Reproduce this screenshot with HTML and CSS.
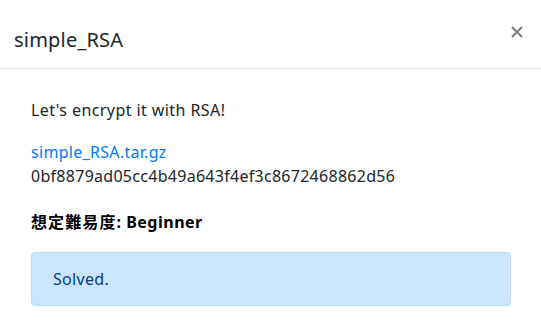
FILE: index.html
```html
<!DOCTYPE html>
<html lang="ja">
<head>
<meta charset="utf-8">
<title>simple_RSA</title>
<link rel="stylesheet" href="styles.css">
</head>
<body>
<div class="modal">
  <div class="modal-header">
    <h5 class="modal-title">simple_RSA</h5>
    <button class="close" type="button" aria-label="Close">
      <svg width="12" height="12" viewBox="0 0 12 12"><path d="M1 1L11 11M11 1L1 11" stroke="#808080" stroke-width="2.2" stroke-linecap="butt"/></svg>
    </button>
  </div>
  <div class="modal-body">
    <p class="desc">Let's encrypt it with RSA!</p>
    <p class="files"><a href="#">simple_RSA.tar.gz</a><br><span class="hash">0bf8879ad05cc4b49a643f4ef3c8672468862d56</span></p>
    <p class="level"><strong><span class="cjk">想定難易度</span>: Beginner</strong></p>
    <div class="alert">Solved.</div>
  </div>
</div>
</body>
</html>
```
FILE: styles.css
```css
html, body {
  margin: 0;
  padding: 0;
  background: #fff;
}
body {
  font-family: "Noto Sans", "Noto Sans CJK JP", sans-serif;
  font-size: 16px;
  line-height: 24px;
  color: #212529;
}
.modal {
  width: 541px;
  height: 336px;
  overflow: hidden;
}
.modal-header {
  display: flex;
  align-items: flex-start;
  padding: 25px 18px 13px 14px;
  border-bottom: 1px solid #dee2e6;
}
.modal-title {
  margin: 0;
  font-size: 20px;
  line-height: 30px;
  font-weight: 400;
  letter-spacing: 0.2px;
  color: #212529;
}
.close {
  margin-left: auto;
  margin-top: 1px;
  padding: 0;
  border: 0;
  background: transparent;
  width: 12px;
  height: 12px;
  display: flex;
}
.modal-body {
  padding: 29px 30px 0 31px;
}
.modal-body p {
  margin: 0;
}
.desc {
  margin-bottom: 18px !important;
  letter-spacing: 0.42px;
}
.files a {
  color: #007bff;
  text-decoration: none;
  letter-spacing: 0.3px;
}
.hash {
  letter-spacing: 0.28px;
}
.files {
  margin-bottom: 22px !important;
}
.level {
  margin-bottom: 18px !important;
}
.level strong {
  font-weight: 700;
  color: #000;
  letter-spacing: 0.5px;
}
.level .cjk {
  letter-spacing: 1.1px;
}
.alert {
  background: #cce5ff;
  border: 1px solid #b8daff;
  border-radius: 4px;
  color: #004085;
  padding: 14px 21px 14px 21px;
  letter-spacing: 0.3px;
}
```
